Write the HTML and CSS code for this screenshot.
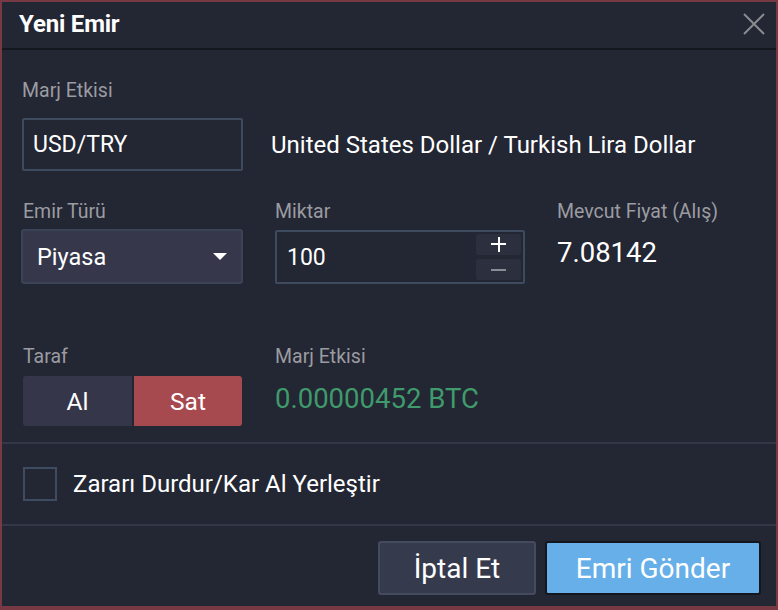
FILE: index.html
```html
<!DOCTYPE html>
<html lang="tr">
<head>
<meta charset="utf-8">
<title>Yeni Emir</title>
<link rel="stylesheet" href="styles.css">
</head>
<body>
<div class="dialog">
  <header class="head">
    <h1 class="title">Yeni Emir</h1>
    <button class="close" aria-label="Kapat">
      <svg width="22" height="22" viewBox="0 0 22 22"><path d="M1 1L21 21M21 1L1 21" stroke="#8a8b90" stroke-width="2" fill="none"/></svg>
    </button>
  </header>
  <section class="body">
    <div class="label">Marj Etkisi</div>
    <div class="pair">
      <div class="input sym">USD/TRY</div>
      <div class="pairname">United States Dollar / Turkish Lira Dollar</div>
    </div>
    <div class="row2">
      <div class="col c1">
        <div class="label">Emir Türü</div>
        <div class="select">Piyasa<span class="caret"></span></div>
      </div>
      <div class="col c2">
        <div class="label">Miktar</div>
        <div class="input qty">100
          <div class="steps">
            <span class="step plus"></span>
            <span class="step minus"></span>
          </div>
        </div>
      </div>
      <div class="col c3">
        <div class="label">Mevcut Fiyat (Alış)</div>
        <div class="price">7.08142</div>
      </div>
    </div>
    <div class="row3">
      <div class="col c1">
        <div class="label">Taraf</div>
        <div class="side">
          <button class="sbtn al">Al</button>
          <button class="sbtn sat">Sat</button>
        </div>
      </div>
      <div class="col c2">
        <div class="label">Marj Etkisi</div>
        <div class="margin">0.00000452 BTC</div>
      </div>
    </div>
  </section>
  <section class="check">
    <span class="box"></span>
    <span class="checklabel">Zararı Durdur/Kar Al Yerleştir</span>
  </section>
  <footer class="foot">
    <button class="btn cancel">İptal Et</button>
    <button class="btn send">Emri Gönder</button>
  </footer>
</div>
</body>
</html>
```
FILE: styles.css
```css
* { box-sizing: border-box; }
html, body { margin: 0; padding: 0; background: #232633; }
body { font-family: Roboto, "Liberation Sans", sans-serif; color: #fff; }
.dialog {
  width: 778px; height: 610px;
  border: 2px solid #773a45; border-bottom-width: 4px;
  background: #232633;
  display: flex; flex-direction: column;
}
.head {
  height: 48px; flex: none;
  display: flex; align-items: center; justify-content: space-between;
  padding: 0 10px 3px 17px;
  border-bottom: 2px solid #15171e;
}
.title { margin: 0; font-size: 24px; font-weight: 700; letter-spacing: -0.2px; }
.close { background: none; border: 0; padding: 0; width: 24px; height: 24px; display: flex; align-items: center; justify-content: center; }
.body { padding: 30px 20px 16px 20px; border-bottom: 2px solid #333746; flex: none; }
.label { font-size: 19.5px; color: #9b9ca1; line-height: 22px; }
.pair { display: flex; align-items: center; margin-top: 16px; gap: 28px; }
.input { border: 2px solid #3e4a5d; border-radius: 2px; font-size: 23px; display: flex; align-items: center; }
.sym { width: 221px; height: 53px; padding-left: 9px; }
.pairname { font-size: 24px; }
.row2 { display: flex; margin-top: 30px; }
.col { display: flex; flex-direction: column; }
.c1 { width: 253px; padding-left: 1px; }
.c2 { width: 282px; }
.row2 .label { margin-bottom: 6px; }
.select {
  width: 222px; height: 55px; border: 2px solid #3a4456; border-radius: 3px;
  background: #36374b; font-size: 23.5px; padding: 0 14px 0 14px;
  display: flex; align-items: center; justify-content: space-between;
  margin-left: -2px;
}
.caret { width: 0; height: 0; border-left: 7px solid transparent; border-right: 7px solid transparent; border-top: 7px solid #fff; }
.qty { width: 250px; height: 54px; padding: 0 2px 0 10px; justify-content: space-between; margin-top: 1px; }
.steps { display: flex; flex-direction: column; gap: 4px; }
.step { width: 45px; height: 21px; background: #2c2f3e; border-radius: 2px; position: relative; }
.step::before, .plus::after { content: ""; position: absolute; background: #fff; left: 15px; top: 9px; width: 15px; height: 2px; }
.plus::after { left: 21.5px; top: 2.5px; width: 2px; height: 15px; }
.minus::before { background: #8a8b94; top: 10px; }
.price { font-size: 27.5px; margin-top: 7px; }
.row3 { display: flex; margin-top: 62px; }
.row3 .label { margin-bottom: 8px; }
.side { display: flex; gap: 2px; }
.sbtn { width: 109px; height: 50px; border: 0; font: inherit; font-size: 24.5px; color: #fff; }
.al { background: #353649; border-radius: 3px 0 0 3px; }
.sat { background: #a74a50; border-radius: 0 3px 3px 0; width: 108px; }
.margin { font-size: 27.5px; color: #3f9a6c; margin-top: 6px; }
.check { height: 82px; flex: none; display: flex; align-items: center; padding-left: 21px; gap: 16px; border-bottom: 2px solid #333746; }
.box { width: 34px; height: 34px; border: 2px solid #3f4c5f; }
.checklabel { font-size: 24px; }
.foot { flex: 1; display: flex; justify-content: flex-end; align-items: flex-start; padding: 15px 15px 0 0; gap: 9px; }
.btn { height: 54px; border-radius: 3px; font: inherit; font-size: 28px; color: #fff; }
.cancel { width: 158px; background: #363a4d; border: 2px solid #454b5e; }
.send { width: 216px; background: #67afe8; border: 2px solid #15171e; }
```
